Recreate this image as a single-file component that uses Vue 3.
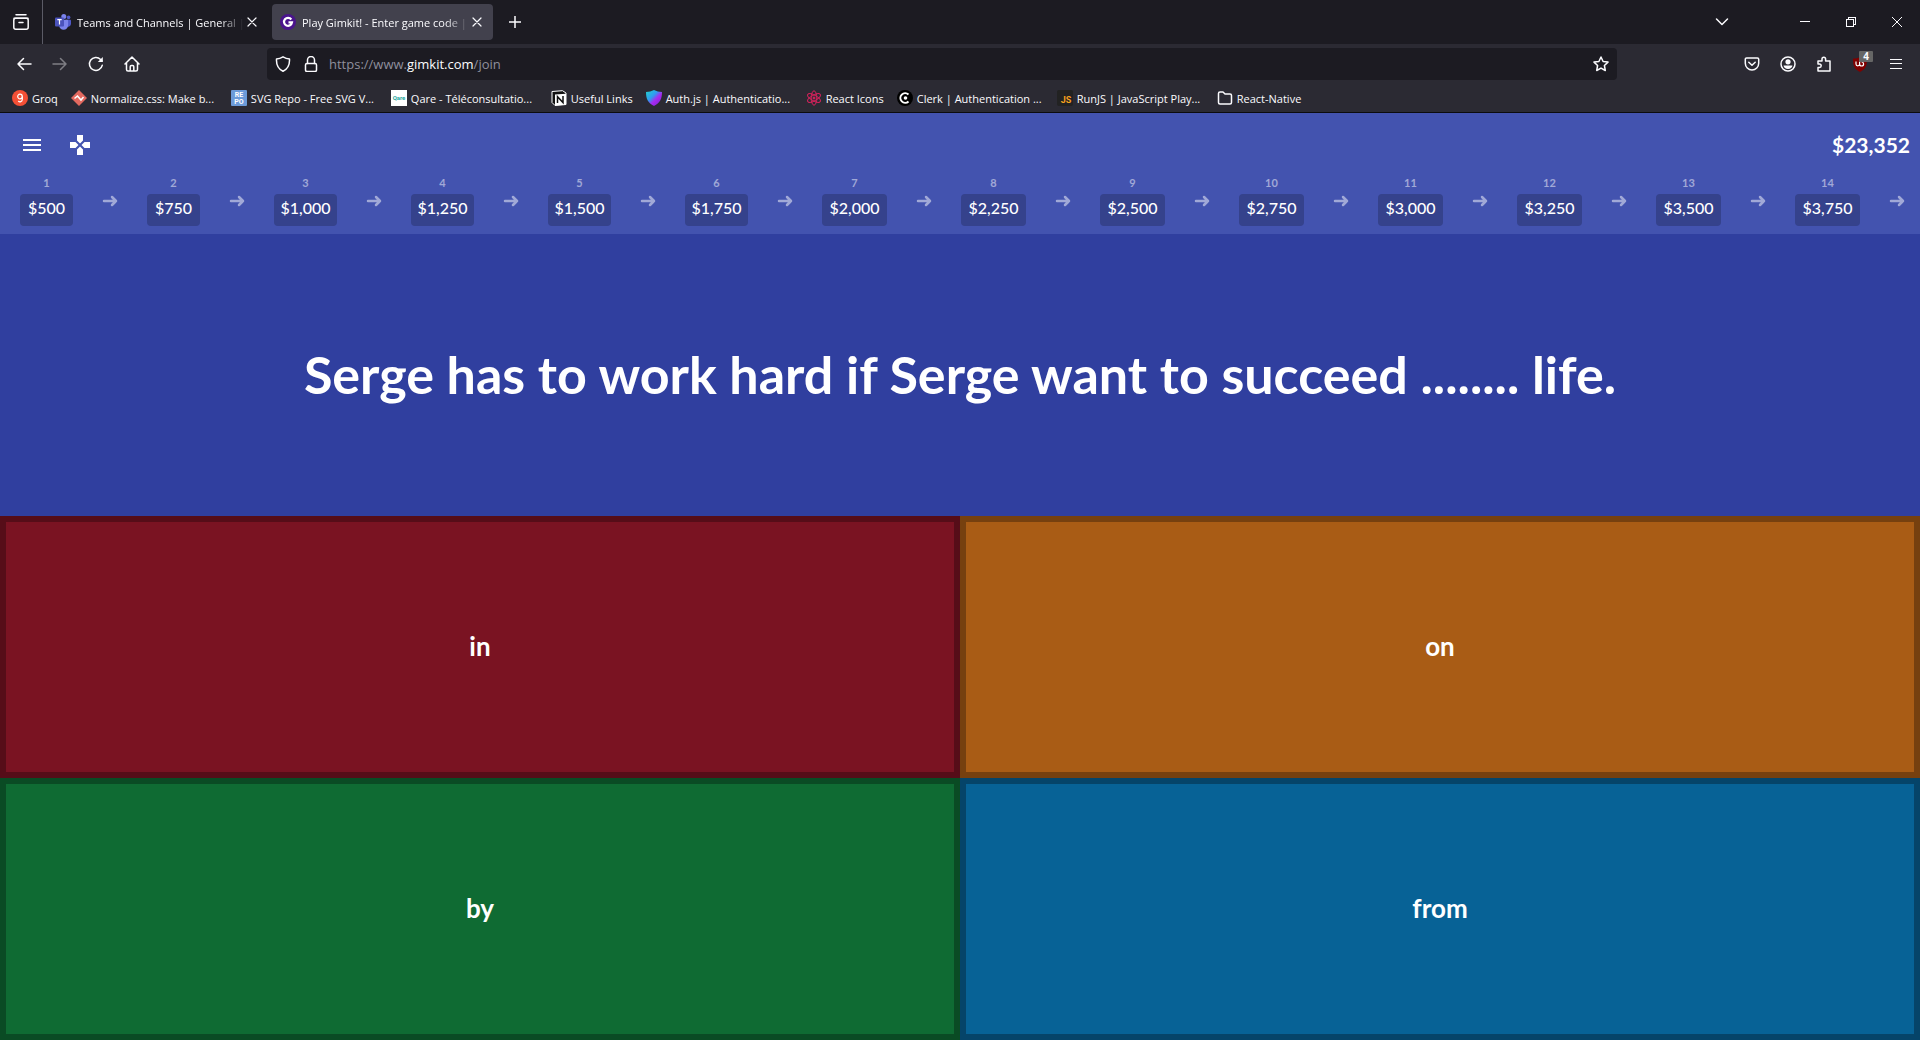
<script setup>
const steps = [500, 750, 1000, 1250, 1500, 1750, 2000, 2250, 2500, 2750, 3000, 3250, 3500, 3750]
const money = (n) => '$' + n.toLocaleString('en-US')
const size = (n) => (n >= 2000 ? 'large' : n >= 1000 ? 'medium' : 'small')
const answers = [
  { text: 'in', tone: 'red' },
  { text: 'on', tone: 'orange' },
  { text: 'by', tone: 'green' },
  { text: 'from', tone: 'blue' },
]
const bookmarks = [
  { icon: 'groq', label: 'Groq' },
  { icon: 'normalize', label: 'Normalize.css: Make b...', long: true },
  { icon: 'svgrepo', label: 'SVG Repo - Free SVG V...', long: true },
  { icon: 'qare', label: 'Qare - Téléconsultatio...', long: true },
  { icon: 'notion', label: 'Useful Links' },
  { icon: 'auth', label: 'Auth.js | Authenticatio...', long: true },
  { icon: 'react', label: 'React Icons' },
  { icon: 'clerk', label: 'Clerk | Authentication ...', long: true },
  { icon: 'runjs', label: 'RunJS | JavaScript Play...', long: true },
  { icon: 'folder', label: 'React-Native' },
]
</script>

<template>
  <div class="window">
    <header class="chrome">
      <div class="tabs">
        <button class="recent" aria-label="Recent browsing">
          <svg width="18" height="18" viewBox="0 0 18 18" class="line">
            <path d="M4 1.8h10" />
            <path d="M2 5.2h14" />
            <rect x="1.8" y="5.2" width="14.4" height="11" rx="2" />
            <path d="M7 9.5h4" />
          </svg>
        </button>
        <div class="tab">
          <svg width="16" height="16" viewBox="0 0 16 16">
            <circle cx="13.6" cy="3.4" r="1.8" fill="#5059c9" />
            <circle cx="8.8" cy="2.6" r="2.5" fill="#7b83eb" />
            <path d="M11 5.8h4.3c.4 0 .7.3.7.7V10a3 3 0 0 1-5 2z" fill="#5059c9" />
            <path d="M5 5.8h7.4c.4 0 .7.3.7.7v4.8a4.5 4.5 0 0 1-9 0z" fill="#7b83eb" />
            <rect x="0" y="3.5" width="9" height="9" rx="1" fill="#4b53bc" />
            <path d="M2.3 5.6h4.4M4.5 5.6v5" stroke="#fff" stroke-width="1.2" />
          </svg>
          <span class="tab-title">Teams and Channels | General |</span>
          <button class="close" aria-label="Close tab">
            <svg width="10" height="10" viewBox="0 0 10 10" class="line thin"><path d="M1 1l8 8M9 1l-8 8" /></svg>
          </button>
        </div>
        <div class="tab active">
          <svg width="16" height="16" viewBox="0 0 16 16">
            <circle cx="8" cy="8" r="8" fill="#4a148c" />
            <path d="M11.3 5.5A4 4 0 1 0 12 8.4H8.5" fill="none" stroke="#fff" stroke-width="2.2" />
          </svg>
          <span class="tab-title">Play Gimkit! - Enter game code |</span>
          <button class="close" aria-label="Close tab">
            <svg width="10" height="10" viewBox="0 0 10 10" class="line thin"><path d="M1 1l8 8M9 1l-8 8" /></svg>
          </button>
        </div>
        <button class="new-tab" aria-label="New tab">
          <svg width="12" height="12" viewBox="0 0 12 12" class="line"><path d="M6 0v12M0 6h12" /></svg>
        </button>
        <button class="list-tabs" aria-label="List all tabs">
          <svg width="14" height="14" viewBox="0 0 14 14" class="line"><path d="M1.5 4l5.5 5.5L12.5 4" /></svg>
        </button>
        <button class="win" aria-label="Minimize">
          <svg width="10" height="10" viewBox="0 0 10 10" class="line crisp"><path d="M0 4.5h10" /></svg>
        </button>
        <button class="win" aria-label="Restore">
          <svg width="10" height="10" viewBox="0 0 10 10" class="line crisp">
            <rect x=".5" y="2.5" width="7" height="7" />
            <path d="M2.5 2.5v-2h7v7h-2" />
          </svg>
        </button>
        <button class="win" aria-label="Close">
          <svg width="10" height="10" viewBox="0 0 10 10" class="line fine"><path d="M0 0l10 10M10 0L0 10" /></svg>
        </button>
      </div>

      <div class="toolbar">
        <button class="tool" aria-label="Back">
          <svg width="16" height="16" viewBox="0 0 16 16" class="line"><path d="M15 8H2M7.5 2.5L2 8l5.5 5.5" /></svg>
        </button>
        <button class="tool faded" aria-label="Forward">
          <svg width="16" height="16" viewBox="0 0 16 16" class="line"><path d="M1 8h13M8.5 2.5L14 8l-5.5 5.5" /></svg>
        </button>
        <button class="tool" aria-label="Reload">
          <svg width="16" height="16" viewBox="0 0 16 16" class="line">
            <path d="M14.3 9.2A6.5 6.5 0 1 1 12.6 3.4L14 5" />
            <path d="M14.8 1v5h-5z" fill="#fbfbfe" stroke="none" />
          </svg>
        </button>
        <button class="tool" aria-label="Home">
          <svg width="16" height="16" viewBox="0 0 16 16" class="line">
            <path d="M1 8l7-7 7 7M2.5 7v6.5c0 1 .5 1.5 1.5 1.5h8c1 0 1.5-.5 1.5-1.5V7M6.2 15v-4.2c0-.8.4-1.2 1.2-1.2h1.2c.8 0 1.2.4 1.2 1.2V15" />
          </svg>
        </button>
        <div class="urlbar">
          <svg width="16" height="16" viewBox="0 0 16 16" class="line">
            <path d="M8 .8c2 1.2 4.3 2 6.5 2.2.3 5-1.5 9.8-6.5 12.2C3 12.8 1.2 8 1.5 3 3.7 2.8 6 2 8 .8z" />
          </svg>
          <svg width="16" height="16" viewBox="0 0 16 16" class="line">
            <rect x="2.5" y="7.5" width="11" height="8" rx="1.5" />
            <path d="M4.5 7.5V4a3.5 3.5 0 0 1 7 0v3.5" />
          </svg>
          <a class="address" href="#">https://www.<b>gimkit.com</b>/join</a>
          <button class="star" aria-label="Bookmark this page">
            <svg width="16" height="16" viewBox="0 0 16 16" class="line">
              <path d="M8 1l2.1 4.5 4.9.6-3.6 3.4.9 5L8 12.1l-4.3 2.4.9-5L1 6.1l4.900-.6z" />
            </svg>
          </button>
        </div>
        <button class="tool" aria-label="Pocket">
          <svg width="16" height="16" viewBox="0 0 16 16" class="line">
            <path d="M2.6 2h10.8c.8 0 1.3.5 1.3 1.3v4a6.7 6.7 0 0 1-13.4 0v-4C1.3 2.5 1.8 2 2.6 2zM4.8 6.2L8 9.3l3.2-3.1" />
          </svg>
        </button>
        <button class="tool" aria-label="Account">
          <svg width="16" height="16" viewBox="0 0 16 16" class="line">
            <circle cx="8" cy="8" r="7" />
            <circle cx="8" cy="5.8" r="2.6" fill="#fbfbfe" stroke="none" />
            <path d="M3.5 9.5h9c-.4 2-2 3.6-4.5 3.6S3.9 11.5 3.5 9.5z" fill="#fbfbfe" stroke="none" />
          </svg>
        </button>
        <button class="tool" aria-label="Extensions">
          <svg width="16" height="16" viewBox="0 0 16 16" class="line">
            <path d="M2 15V11.500h1.500a1.700 1.700 0 0 0 0-3.400H2V5h4V3a1.800 1.800 0 0 1 3.600 0v2H14v10z" />
          </svg>
        </button>
        <button class="tool blocker" aria-label="Ad blocker">
          <svg width="16" height="16" viewBox="0 0 16 16">
            <path d="M8 1c2 1.2 4.5 1.5 7 1.5 0 7-1 10.5-7 13.5C2 13 1 9.5 1 2.5c2.5 0 5-.3 7-1.5z" fill="#800000" />
            <path d="M4 5.500V8a1.800 1.800 0 0 0 3.600 0V5.500M7.600 8a2 2 0 1 0 2-2" fill="none" stroke="#fff" stroke-width="1.2" />
          </svg>
          <span class="count">4</span>
        </button>
        <button class="tool" aria-label="Menu">
          <svg width="12" height="10" viewBox="0 0 12 10" class="line crisp"><path d="M0 .5h12M0 4.5h12M0 9.5h12" /></svg>
        </button>
      </div>

      <nav class="bookmarks" aria-label="Bookmarks">
        <a v-for="b in bookmarks" :key="b.label" href="#" class="bookmark" :class="{ long: b.long }">
          <svg width="16" height="16" viewBox="0 0 16 16">
            <g v-if="b.icon === 'groq'">
              <circle cx="8" cy="8" r="8" fill="#f55036" />
              <circle cx="8" cy="6.5" r="2.3" fill="none" stroke="#fff" stroke-width="1.2" />
              <path d="M10.3 6.5v3a2.300 2.300 0 0 1-4 1.500" fill="none" stroke="#fff" stroke-width="1.2" />
            </g>
            <g v-else-if="b.icon === 'normalize'">
              <path d="M8 0l8 8-8 8-8-8z" fill="#e3695f" />
              <path d="M3.500 8.500L6.500 6l3.500 4 2.500-3" fill="none" stroke="#fff" stroke-width="1.5" />
            </g>
            <g v-else-if="b.icon === 'svgrepo'">
              <rect width="16" height="16" rx="1" fill="#6c9bd9" />
              <text x="8" y="7" class="glyph" font-size="7">RE</text>
              <text x="8" y="14" class="glyph" font-size="7">PO</text>
            </g>
            <g v-else-if="b.icon === 'qare'">
              <rect width="16" height="16" fill="#fff" />
              <text x="8" y="10" class="glyph teal" font-size="6">Qare</text>
            </g>
            <g v-else-if="b.icon === 'notion'">
              <path d="M1 1.500L11.500.7 15 3v11.500L4 15.500 1 12.500z" fill="#111" stroke="#fff" />
              <path d="M4 4.500l11-.7v11L4 15.500z" fill="#fff" />
              <path d="M6.500 13V6.700l5.500 5.800V6" fill="none" stroke="#111" stroke-width="1.5" />
            </g>
            <g v-else-if="b.icon === 'auth'">
              <defs>
                <linearGradient id="auth-fill" x1="0" y1="0" x2="1" y2="1">
                  <stop offset="0" stop-color="#21d3c8" />
                  <stop offset=".4" stop-color="#2f9bf0" />
                  <stop offset=".6" stop-color="#a62bf0" />
                  <stop offset="1" stop-color="#7c1fd0" />
                </linearGradient>
              </defs>
              <path d="M8 0c2.500 1.300 5 1.800 8 2 0 7-2 11-8 14C2 13 0 9 0 2c3-.2 5.500-.7 8-2z" fill="url(#auth-fill)" />
            </g>
            <g v-else-if="b.icon === 'react'" fill="none" stroke="#d6225c">
              <ellipse cx="8" cy="8" rx="7.2" ry="2.8" transform="rotate(30 8 8)" />
              <ellipse cx="8" cy="8" rx="7.2" ry="2.8" transform="rotate(90 8 8)" />
              <ellipse cx="8" cy="8" rx="7.2" ry="2.8" transform="rotate(150 8 8)" />
              <circle cx="8" cy="8" r="1" fill="#d6225c" />
            </g>
            <g v-else-if="b.icon === 'clerk'">
              <circle cx="8" cy="8" r="8" fill="#000" />
              <path d="M11.500 4.500a4.800 4.800 0 1 0 0 7" fill="none" stroke="#fff" stroke-width="2" />
              <circle cx="8.5" cy="8" r="1.8" fill="#fff" />
            </g>
            <g v-else-if="b.icon === 'runjs'">
              <rect width="16" height="16" rx="2" fill="#222" />
              <text x="9" y="13" class="glyph amber" font-size="9">JS</text>
            </g>
            <path v-else class="line" d="M1.500 3.500c0-1 .5-1.500 1.500-1.500h3l2 2h5c1 0 1.500.5 1.500 1.500v7c0 1-.5 1.500-1.500 1.500H3c-1 0-1.500-.5-1.500-1.500z" />
          </svg>
          <span>{{ b.label }}</span>
        </a>
      </nav>
    </header>

    <main class="game">
      <section class="status">
        <div class="status-top">
          <button class="icon" aria-label="Menu">
            <svg width="24" height="24" viewBox="0 0 24 24" fill="#fff"><path d="M3 18h18v-2H3v2zm0-5h18v-2H3v2zm0-7v2h18V6H3z" /></svg>
          </button>
          <button class="icon" aria-label="Controls">
            <svg width="24" height="24" viewBox="0 0 24 24" fill="#fff"><path d="M15 7.500V2H9v5.500l3 3 3-3zM7.500 9H2v6h5.500l3-3-3-3zM9 16.500V22h6v-5.500l-3-3-3 3zM16.500 9l-3 3 3 3H22V9h-5.500z" /></svg>
          </button>
          <strong class="balance">$23,352</strong>
        </div>
        <ol class="streak">
          <li v-for="(s, i) in steps" :key="s">
            <div class="step" :class="size(s)">
              <span class="number">{{ i + 1 }}</span>
              <span class="chip">{{ money(s) }}</span>
            </div>
            <svg width="16" height="12" viewBox="0 0 16 12"><path d="M2 6h12M10 2l4 4-4 4" /></svg>
          </li>
        </ol>
      </section>

      <section class="question">
        <h1>Serge has to work hard if Serge want to succeed ........ life.</h1>
      </section>

      <section class="answers">
        <button v-for="a in answers" :key="a.text" class="answer" :class="a.tone">{{ a.text }}</button>
      </section>
    </main>
  </div>
</template>

<style>
body {
  margin: 0;
}
</style>

<style scoped>
.window {
  display: flex;
  flex-direction: column;
  min-height: 100vh;
  overflow: hidden;
  font-family: "Lato", sans-serif;
  color: #fff;
}
button {
  display: flex;
  align-items: center;
  justify-content: center;
  padding: 0;
  border: 0;
  background: none;
  color: inherit;
  font: inherit;
}
a {
  color: inherit;
  text-decoration: none;
}
svg {
  flex: none;
}
.line {
  fill: none;
  stroke: #fbfbfe;
  stroke-width: 1.5;
  stroke-linecap: round;
  stroke-linejoin: round;
}
.thin {
  stroke-width: 1.2;
}
.fine {
  stroke-width: 1;
}
.crisp {
  stroke-width: 1;
  stroke-linecap: butt;
  stroke-linejoin: miter;
  shape-rendering: crispEdges;
}

/* Browser frame */
.chrome {
  background: #2b2a33;
  border-bottom: 1px solid #0c0c0d;
  font-family: "Open Sans", sans-serif;
  font-size: 11px;
  color: #fbfbfe;
}
.tabs {
  display: flex;
  align-items: center;
  height: 44px;
  background: #1c1b22;
}
.recent {
  width: 43px;
  height: 44px;
  border-right: 1px solid #5b5b66;
}
.tab {
  display: flex;
  align-items: center;
  box-sizing: border-box;
  width: 221px;
  height: 36px;
  margin-left: 4px;
  padding: 0 6px 0 8px;
  gap: 6px;
  border-radius: 4px;
}
.tab.active {
  background: #42414d;
}
.tab-title {
  flex: 1;
  overflow: hidden;
  white-space: nowrap;
  mask-image: linear-gradient(to left, transparent, #000 24px);
}
.close {
  width: 20px;
  height: 20px;
  margin-left: -8px;
}
.new-tab {
  width: 36px;
  height: 36px;
  margin-left: 4px;
}
.list-tabs {
  width: 36px;
  height: 36px;
  margin-left: auto;
  margin-right: 42px;
}
.win {
  width: 46px;
  height: 44px;
}
.toolbar {
  display: flex;
  align-items: center;
  height: 40px;
  padding: 0 6px;
}
.tool {
  width: 36px;
  height: 32px;
}
.faded {
  opacity: 0.4;
}
.urlbar {
  flex: 1;
  display: flex;
  align-items: center;
  height: 32px;
  margin: 0 117px;
  padding: 0 8px;
  gap: 12px;
  border-radius: 4px;
  background: #1c1b22;
}
.address {
  flex: 1;
  margin-left: -2px;
  font-size: 13px;
  color: #8f8f9d;
}
.address b {
  font-weight: 400;
  color: #fbfbfe;
}
.blocker {
  position: relative;
}
.count {
  position: absolute;
  top: 3px;
  right: 5px;
  width: 14px;
  height: 11px;
  border-radius: 1px;
  background: #666;
  font-size: 10px;
  font-weight: 700;
  line-height: 11px;
  text-align: center;
}
.bookmarks {
  display: flex;
  align-items: center;
  height: 28px;
  padding: 0 12px;
  gap: 13px;
}
.bookmark {
  display: flex;
  align-items: center;
  gap: 4px;
  white-space: nowrap;
}
.bookmark.long {
  width: 147px;
}
.glyph {
  font-family: "Roboto", sans-serif;
  font-weight: 700;
  text-anchor: middle;
  fill: #fff;
}
.teal {
  fill: #1fa9a0;
}
.amber {
  fill: #f7a01d;
}

/* Game */
.game {
  flex: 1;
  display: flex;
  flex-direction: column;
}
.status {
  background: #4353af;
}
.status-top {
  display: flex;
  align-items: center;
  height: 64px;
  padding: 0 10px 0 20px;
  gap: 24px;
}
.balance {
  margin-left: auto;
  padding-bottom: 2px;
  font-size: 21px;
  font-weight: 700;
}
.streak {
  display: flex;
  margin: 0;
  padding: 0 0 8px 20px;
  list-style: none;
}
.streak li {
  display: flex;
  align-items: center;
}
.streak svg {
  margin: 0 29px;
  padding-bottom: 2px;
  fill: none;
  stroke: rgba(255, 255, 255, 0.5);
  stroke-width: 2.5;
  stroke-linecap: round;
  stroke-linejoin: round;
}
.step {
  display: flex;
  flex-direction: column;
  text-align: center;
}
.small {
  width: 53px;
}
.medium {
  width: 63px;
}
.large {
  width: 65px;
}
.number {
  height: 17px;
  font-size: 11px;
  font-weight: 700;
  line-height: 12px;
  color: rgba(255, 255, 255, 0.5);
}
.chip {
  padding-bottom: 4px;
  border-radius: 4px;
  background: #35428c;
  font-size: 16px;
  font-weight: 500;
  line-height: 28px;
}
.question {
  flex: 282 1 0;
  display: flex;
  align-items: center;
  justify-content: center;
  background: #303f9f;
}
h1 {
  margin: 0;
  padding-bottom: 2px;
  font-size: 52px;
  font-weight: 700;
  text-align: center;
}
.answers {
  flex: 524 1 0;
  display: grid;
  grid-template-columns: 1fr 1fr;
  grid-auto-rows: 1fr;
}
.answer {
  padding-bottom: 2px;
  border: 6px solid;
  font-size: 26px;
  font-weight: 700;
}
.red {
  background: #7a1322;
  border-color: #560d18;
}
.orange {
  background: #a95c15;
  border-color: #76400f;
}
.green {
  background: #0f6b33;
  border-color: #0a4b24;
}
.blue {
  background: #076296;
  border-color: #054469;
}
</style>
